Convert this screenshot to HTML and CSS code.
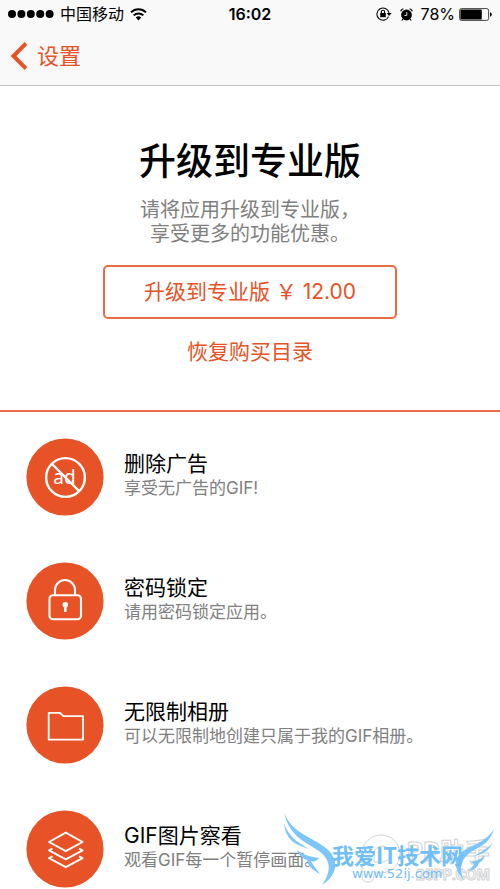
FILE: index.html
```html
<!DOCTYPE html>
<html lang="zh-CN">
<head>
<meta charset="utf-8">
<meta name="viewport" content="width=device-width, initial-scale=1">
<title>升级到专业版</title>
<link rel="stylesheet" href="styles.css">
</head>
<body>
<div class="screen">
  <header class="top">
    <div class="status">
      <div class="status-left">
        <svg width="46" height="8" viewBox="0 0 46 8" aria-hidden="true"><g fill="#000"><circle cx="4" cy="4" r="4"/><circle cx="13.4" cy="4" r="4"/><circle cx="22.8" cy="4" r="4"/><circle cx="32.2" cy="4" r="4"/><circle cx="41.6" cy="4" r="4"/></g></svg>
        <span class="carrier">中国移动</span>
        <svg width="17" height="13" viewBox="0 0 17 13" aria-hidden="true"><g fill="none" stroke="#000" stroke-width="2"><path d="M1 4.4a10.6 10.6 0 0 1 15 0"/><path d="M3.7 7.4a6.8 6.8 0 0 1 9.6 0"/></g><path d="M5.8 9.6a4 4 0 0 1 5.4 0L8.5 12.4z"/></svg>
      </div>
      <time class="clock">16:02</time>
      <div class="status-right">
        <svg class="rotation" width="16" height="14" viewBox="0 0 16 14" aria-hidden="true"><path d="M12.6 9.6A6.1 6.1 0 1 1 13 6" fill="none" stroke="#000" stroke-width="1.1"/><path d="M10.6 6h5l-2.5 3z"/><rect x="4.2" y="6" width="5.6" height="4.2"/><path d="M5.4 6V4.8a1.6 1.6 0 0 1 3.2 0V6" fill="none" stroke="#000" stroke-width="1.1"/></svg>
        <svg class="alarm" width="13" height="13" viewBox="0 0 13 13" aria-hidden="true"><circle cx="6.5" cy="7" r="5.4"/><path d="M.6 3.2Q1.4 1.4 3.4.8M12.4 3.2Q11.6 1.4 9.6.8M3 11l-1.2 1.5M10 11l1.2 1.5" fill="none" stroke="#000" stroke-width="1.2"/><path d="M6.8 4.2v3.2H4.4" fill="none" stroke="#fff" stroke-width=".9"/></svg>
        <span>78%</span>
        <svg class="battery" width="33" height="13" viewBox="0 0 33 13" aria-hidden="true"><rect x=".6" y=".6" width="29" height="11.8" rx="1.8" fill="none" stroke="#444" stroke-width="1"/><rect x="1.4" y="1.4" width="21.4" height="10.2" rx=".6"/><path d="M31 4.2q1.8.5 1.8 2.3T31 8.8z"/></svg>
      </div>
    </div>
    <nav class="nav">
      <a class="back" href="#settings">
        <svg width="17" height="28" viewBox="0 0 17 28" aria-hidden="true"><path d="M16 1.5 3.5 14 16 26.5" fill="none" stroke="#e75226" stroke-width="4"/></svg>
        <span>设置</span>
      </a>
    </nav>
  </header>
  <main>
    <section class="hero">
      <h1>升级到专业版</h1>
      <p>请将应用升级到专业版，<br>享受更多的功能优惠。</p>
      <button class="buy" type="button">升级到专业版 ￥ 12.00</button>
      <button class="restore" type="button">恢复购买目录</button>
    </section>
    <ul class="features">
      <li>
        <svg class="icon" viewBox="0 0 78 78" aria-hidden="true"><circle cx="39" cy="39" r="38.6" fill="#e75226"/><text class="ad" x="38.4" y="45.6" text-anchor="middle">ad</text><g fill="none" stroke="#fff" stroke-width="2.4"><circle cx="39.5" cy="39.5" r="19.4"/><path d="M26 26 53 53"/></g></svg>
        <div class="copy"><h2>删除广告</h2><p>享受无广告的GIF!</p></div>
      </li>
      <li>
        <svg class="icon" viewBox="0 0 78 78" aria-hidden="true"><circle cx="39" cy="39" r="38.6" fill="#e75226"/><g fill="none" stroke="#fff" stroke-width="2.1"><rect x="23.5" y="33.3" width="31.5" height="24" rx="3.5"/><path d="M29 33v-5a10 10 0 0 1 20 0v5"/></g><circle cx="39.3" cy="42.8" r="2.8" fill="#fff"/><path d="M39.3 43v7" stroke="#fff" stroke-width="2.6"/></svg>
        <div class="copy"><h2>密码锁定</h2><p>请用密码锁定应用。</p></div>
      </li>
      <li>
        <svg class="icon" viewBox="0 0 78 78" aria-hidden="true"><circle cx="39" cy="39" r="38.6" fill="#e75226"/><path d="M22.7 26.8h11l4 3.400H57v23.400H22.7z" fill="none" stroke="#fff" stroke-width="1.8" stroke-linejoin="round"/></svg>
        <div class="copy"><h2>无限制相册</h2><p>可以无限制地创建只属于我的GIF相册。</p></div>
      </li>
      <li>
        <svg class="icon" viewBox="0 0 78 78" aria-hidden="true"><circle cx="39" cy="39" r="38.6" fill="#e75226"/><g fill="none" stroke="#fff" stroke-width="1.9" stroke-linejoin="round"><path d="M39.8 22.6 56.6 32 39.8 41.2 23 32z"/><path d="M26.5 38.6 23 40.4 39.8 49.4 56.6 40.4 53 38.6M26.5 46.4 23 48.2 39.8 57.2 56.6 48.2 53 46.4"/></g></svg>
        <div class="copy"><h2>GIF图片察看</h2><p>观看GIF每一个暂停画面。</p></div>
      </li>
    </ul>
  </main>
  <svg class="watermark" width="220" height="81" viewBox="0 0 220 81" role="img" aria-label="我爱IT技术网">
    <g fill="#fff" stroke="#d2d2d2" stroke-width="1">
      <path d="M82 68V46a19 19 0 1 1 19 19h-7v3q0 6-6 6t-6-6M94 54v-8a8 8 0 1 1 8 8z" fill="none"/>
      <text class="pp" x="127" y="53">PP助手</text>
      <text class="pp-url" x="136" y="72">25PP.COM</text>
    </g>
    <g fill="#7cc6f9">
      <path d="M4 4C10 22 26 27 40 36c20 11 20 30 2 41 10-14 9-25-3-34C25 34 9 28 4 4z"/>
      <path d="M4 15c4 13 13 19 25 26C14 37 5 30 4 15zM17 42c7 5 13 7 22 8-2 3-5 4-8 3 2 4 5 8 9 13-8-4-12-9-13-14-5-2-8-5-10-10z"/>
      <path d="M214 21c-4 13-12 17-20 21-13 8-16 17-10 30-11-11-11-23 2-31 12-6 21-9 28-20z"/>
      <path d="M213 34c-4 9-10 12-19 14 8-5 14-7 19-14zM205 47c-4 4-8 6-14 7l3 2c-1 3-4 5-6 7 6-1 9-3 11-8 3-2 5-4 6-8z"/>
    </g>
    <g fill="#70c0f7">
      <text class="site" x="52" y="56">我爱IT技术网</text>
      <text class="site-url" x="72" y="70">www.52ij.com</text>
    </g>
  </svg>
</div>
</body>
</html>
```
FILE: styles.css
```css
* { box-sizing: border-box; }
body {
  margin: 0;
  background: #fff;
  color: #000;
  font-family: Inter, "Noto Sans CJK SC", sans-serif;
}
h1, h2, p, ul { margin: 0; padding: 0; }
.screen {
  position: relative;
  height: 100vh;
  overflow: hidden;
}
.top {
  background: #f9f9f9;
  border-bottom: 1px solid #c4c4c4;
}
.status {
  display: grid;
  grid-template-columns: 1fr auto 1fr;
  align-items: center;
  height: 28px;
  padding: 0 8px;
  font-size: 16px;
  line-height: 20px;
}
.status-left, .status-right { display: flex; align-items: center; }
.status-left { gap: 6px; }
.status-right { justify-content: flex-end; gap: 8px; }
.battery { margin-left: -4px; }
.clock { font-weight: 600; }
.nav { padding: 8px 10px 10px; height: 57px; }
.back {
  display: inline-flex;
  align-items: center;
  gap: 10px;
  height: 40px;
  color: #e75226;
  font-size: 22px;
  line-height: 28px;
  text-decoration: none;
}
.hero {
  display: flex;
  flex-direction: column;
  align-items: center;
  padding: 50px 16px 44px;
  border-bottom: 2px solid #ea6b45;
  text-align: center;
}
.hero h1 {
  font-size: 37px;
  line-height: 52px;
  font-weight: 500;
}
.hero p {
  margin-top: 10px;
  color: #808080;
  font-size: 20px;
  line-height: 24px;
}
button {
  border: 0;
  padding: 0;
  background: none;
  color: #e75226;
  font: inherit;
  font-size: 21px;
  line-height: 28px;
}
.buy {
  margin-top: 19px;
  padding: 11px 39px;
  border: 2px solid #ea6b45;
  border-radius: 5px;
}
.restore { margin-top: 19px; padding: 0 8px; }
.features { list-style: none; padding: 26px 26px 0; }
.features li {
  display: flex;
  align-items: center;
  gap: 20px;
  height: 78px;
  margin-bottom: 46px;
}
.icon { flex: none; width: 78px; height: 78px; }
.copy { padding-bottom: 2px; }
.features h2 {
  font-size: 21px;
  line-height: 24px;
  font-weight: 400;
}
.features p {
  color: #808080;
  font-size: 17px;
  line-height: 24px;
}
.ad { fill: #fff; font-family: "Noto Sans", sans-serif; font-size: 19px; }
.watermark { position: absolute; right: 0; bottom: 0; }
.pp { font-size: 25px; font-weight: 700; }
.pp-url { font-size: 14px; font-weight: 700; }
.site { font-family: "Noto Sans CJK SC", sans-serif; font-size: 22px; font-weight: 700; }
.site-url { font-family: "DejaVu Sans", sans-serif; font-size: 13px; }
```
